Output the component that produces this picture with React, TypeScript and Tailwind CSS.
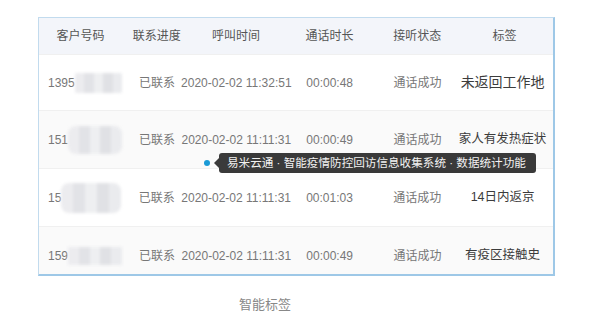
const font = { fontFamily: '"Liberation Sans", "Noto Sans CJK SC", sans-serif' };

type Row = {
  prefix: string;
  time: string;
  duration: string;
  tag: string;
  tagSize: string;
  height: string;
  bg: string;
  mask: { w: string; h: string; round: string };
};

const rows: Row[] = [
  {
    prefix: '1395',
    time: '2020-02-02 11:32:51',
    duration: '00:00:48',
    tag: '未返回工作地',
    tagSize: 'text-[14px]',
    height: 'h-[56px]',
    bg: 'bg-white',
    mask: { w: 'w-[50px]', h: 'h-[20px]', round: 'rounded-[2px]' },
  },
  {
    prefix: '151',
    time: '2020-02-02 11:11:31',
    duration: '00:00:49',
    tag: '家人有发热症状',
    tagSize: 'text-[12.5px]',
    height: 'h-[58px]',
    bg: 'bg-[#fafafa]',
    mask: { w: 'w-[54px]', h: 'h-[28px]', round: 'rounded-[8px]' },
  },
  {
    prefix: '15',
    time: '2020-02-02 11:11:31',
    duration: '00:01:03',
    tag: '14日内返京',
    tagSize: 'text-[12.5px]',
    height: 'h-[58px]',
    bg: 'bg-white',
    mask: { w: 'w-[60px]', h: 'h-[30px]', round: 'rounded-[8px]' },
  },
  {
    prefix: '159',
    time: '2020-02-02 11:11:31',
    duration: '00:00:49',
    tag: '有疫区接触史',
    tagSize: 'text-[12.5px]',
    height: 'h-[58px]',
    bg: 'bg-[#fafafa]',
    mask: { w: 'w-[54px]', h: 'h-[18px]', round: 'rounded-[1px]' },
  },
];

// blurred mosaic hiding the rest of the phone number
function Mask({ w, h, round }: Row['mask']) {
  return (
    <div className={`${w} ${h} ${round} flex overflow-hidden blur-[1.5px]`}>
      <div className="flex-1 bg-[#ececef]" />
      <div className="flex-1 bg-[#e2e3e7]" />
      <div className="flex-1 bg-[#eeeff1]" />
      <div className="flex-1 bg-[#e0e1e5]" />
      <div className="flex-1 bg-[#eaebee]" />
    </div>
  );
}

const App = () => {
  return (
    <div className="w-[600px] h-[329px] bg-white overflow-hidden" style={font}>
      <div className="pt-[17px] pl-[38px]">
        <div className="relative w-[517px] h-[259px] border border-[#c2dbee] border-r-2 border-b-2 border-r-[#9ec8e7] border-b-[#9ec8e7] overflow-hidden">
          <div className="flex h-[36px] items-center bg-[#f3f5fa] text-[12px] text-[#555]">
            <div className="w-[83px] flex justify-center">客户号码</div>
            <div className="w-[70px] flex justify-center">联系进度</div>
            <div className="w-[89px] flex justify-center">呼叫时间</div>
            <div className="w-[98px] flex justify-center">通话时长</div>
            <div className="w-[78px] flex justify-center">接听状态</div>
            <div className="w-[97px] flex justify-center">标签</div>
          </div>
          {rows.map((r) => (
            <div
              key={r.tag}
              className={`flex items-center ${r.height} ${r.bg} border-t border-[#f0f0f0] text-[12px] text-[#777] whitespace-nowrap`}
            >
              <div className="w-[83px] flex items-center pl-[9px]">
                <span>{r.prefix}</span>
                <Mask {...r.mask} />
              </div>
              <div className="w-[70px] flex justify-center">已联系</div>
              <div className="w-[89px] flex justify-center">{r.time}</div>
              <div className="w-[98px] flex justify-center">{r.duration}</div>
              <div className="w-[78px] flex justify-center">通话成功</div>
              <div className={`w-[97px] flex justify-center pr-[4px] text-[#3c3c3c] ${r.tagSize}`}>{r.tag}</div>
            </div>
          ))}

          {/* hover tip on the second row */}
          <div className="absolute left-[165px] top-[135px] flex items-center">
            <span className="w-[6px] h-[6px] rounded-full bg-[#1a9ad6]" />
            <span className="ml-[4px] w-0 h-0 border-y-[5px] border-y-transparent border-r-[5px] border-r-[#3a3a3a]" />
            <div className="h-[20px] w-[317px] rounded-[3px] bg-[#3a3a3a] text-[11.6px] text-[#f2f2f2] flex items-center pl-[8px] whitespace-nowrap">
              易米云通 · 智能疫情防控回访信息收集系统 · 数据统计功能
            </div>
          </div>
        </div>
      </div>
      <div className="mt-[19px] pl-[239px] text-[13px] text-[#888]">智能标签</div>
    </div>
  );
};

export default App;
